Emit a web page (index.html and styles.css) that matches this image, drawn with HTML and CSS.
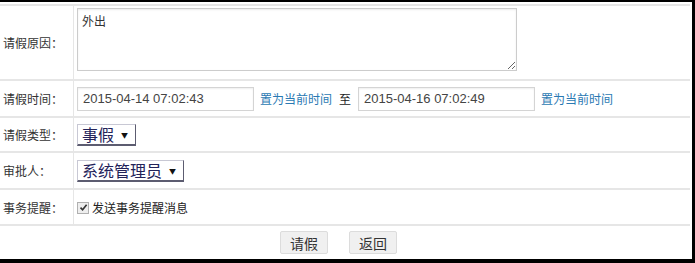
FILE: index.html
```html
<!DOCTYPE html>
<html lang="zh-CN">
<head>
    <meta charset="UTF-8">
    <title>请假</title>
    <link rel="stylesheet" href="styles.css">
</head>
<body>
    <div class="page">
        <table class="form-table">
            <tr class="row-reason">
                <td class="label">请假原因：</td>
                <td class="value"><textarea class="reason">外出</textarea></td>
            </tr>
            <tr class="row-time">
                <td class="label">请假时间：</td>
                <td class="value">
                    <div class="time-line">
                        <input type="text" class="date-input" value="2015-04-14 07:02:43">
                        <a href="#" class="now-link">置为当前时间</a>
                        <span class="to">至</span>
                        <input type="text" class="date-input" value="2015-04-16 07:02:49">
                        <a href="#" class="now-link">置为当前时间</a>
                    </div>
                </td>
            </tr>
            <tr class="row-type">
                <td class="label">请假类型：</td>
                <td class="value">
                    <span class="select-wrap">
                        <select class="sel">
                            <option>事假</option>
                            <option>病假</option>
                            <option>年假</option>
                        </select>
                    </span>
                </td>
            </tr>
            <tr class="row-approver">
                <td class="label">审批人：</td>
                <td class="value">
                    <span class="select-wrap">
                        <select class="sel">
                            <option>系统管理员</option>
                        </select>
                    </span>
                </td>
            </tr>
            <tr class="row-remind">
                <td class="label">事务提醒：</td>
                <td class="value">
                    <label class="check-label">
                        <span class="check-box">
                            <svg width="9" height="9" viewBox="0 0 9 9"><path d="M1.5 4.6 L3.6 6.8 L7.6 1.8" fill="none" stroke="#333" stroke-width="1.6"/></svg>
                        </span>发送事务提醒消息
                    </label>
                </td>
            </tr>
            <tr class="row-buttons">
                <td colspan="2">
                    <div class="buttons">
                        <button class="btn">请假</button>
                        <button class="btn">返回</button>
                    </div>
                </td>
            </tr>
        </table>
    </div>
</body>
</html>
```

FILE: styles.css
```css
body {
    margin: 0;
    background: #000;
    font-family: "Noto Sans CJK SC", "Liberation Sans", sans-serif;
    font-size: 12px;
    color: #333;
}
.page {
    background: #fff;
    width: 692px;
    height: 257px;
    margin-top: 2px;
    padding-top: 2px;
    box-sizing: border-box;
}
.form-table {
    width: 690px;
    border-collapse: collapse;
}
.form-table td {
    padding: 0;
    border-top: 2px solid #e6e6e6;
    vertical-align: middle;
}
.label {
    width: 70px;
    padding-left: 3px !important;
    border-right: 1px solid #e6e6e6;
    white-space: nowrap;
    color: #333;
}
.value {
    padding-left: 3px !important;
}
.row-reason td { height: 71px; }
.row-reason .value {
    vertical-align: top;
    padding-top: 2px !important;
}
.row-time td { height: 35px; }
.row-type td { height: 33px; }
.row-approver td { height: 35px; }
.row-remind td { height: 34px; }
.row-buttons td { height: 33px; }

.reason {
    display: block;
    width: 440px;
    height: 63px;
    box-sizing: border-box;
    border: 1px solid #cccccc;
    box-shadow: inset 0 1px 2px rgba(0,0,0,0.08);
    padding: 3px 4px;
    font-family: "Noto Sans CJK SC", sans-serif;
    font-size: 12px;
    color: #333;
    resize: both;
}
.time-line {
    display: flex;
    align-items: center;
}
.date-input {
    width: 177px;
    height: 24px;
    box-sizing: border-box;
    border: 1px solid #d4d4d4;
    box-shadow: inset 0 1px 2px rgba(0,0,0,0.07);
    padding: 0 5px;
    font-family: "Liberation Sans", Arial, sans-serif;
    font-size: 13px;
    color: #444;
}
.now-link {
    margin-left: 6px;
    color: #2a79b3;
    text-decoration: none;
}
.to {
    margin: 0 7px 0 7px;
    color: #222;
}
.select-wrap {
    position: relative;
    display: inline-block;
}
.select-wrap::after {
    content: "▼";
    position: absolute;
    right: 8px;
    top: 6px;
    font-size: 7px;
    color: #111;
    pointer-events: none;
}
.sel {
    -webkit-appearance: none;
    appearance: none;
    height: 22px;
    border: 1px solid #c8c8d4;
    border-right: 1px solid #5c5c70;
    border-bottom: 2px solid #5c5c70;
    background: #fff;
    padding: 0 20px 0 4px;
    font-family: "Noto Sans CJK SC", sans-serif;
    font-size: 16px;
    line-height: 18px;
    color: #23235a;
    border-radius: 0;
}
.check-label {
    display: inline-flex;
    align-items: center;
    color: #222;
}
.check-box {
    display: inline-flex;
    align-items: center;
    justify-content: center;
    width: 10px;
    height: 10px;
    margin-right: 3px;
    border: 1px solid #b0b0b0;
    background: #eeeeee;
}
.buttons {
    display: flex;
    justify-content: center;
    gap: 21px;
    padding-right: 13px;
}
.btn {
    width: 48px;
    height: 23px;
    background: #f0f0f0;
    border: 1px solid #dcdcdc;
    border-radius: 2px;
    font-family: "Noto Sans CJK SC", sans-serif;
    font-size: 14px;
    color: #333;
    padding: 0;
}
```
